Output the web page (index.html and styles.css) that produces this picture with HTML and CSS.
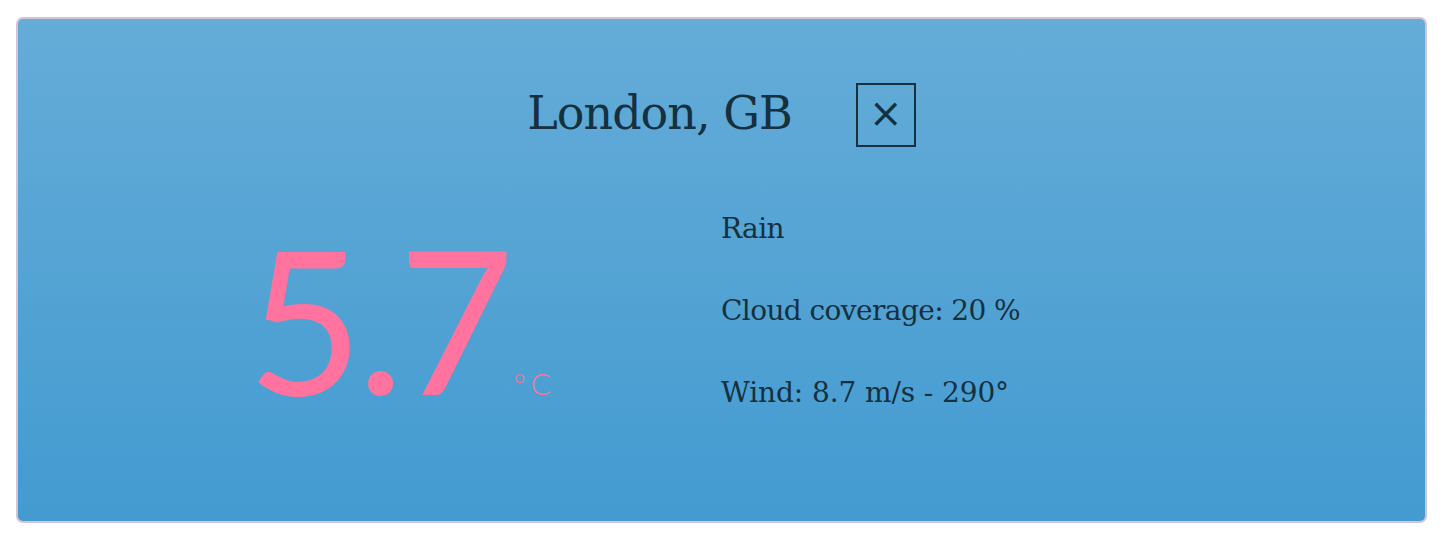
FILE: index.html
```html
<!DOCTYPE html>
<html>
<head>
<meta charset="utf-8">
<link rel="stylesheet" href="styles.css">
</head>
<body>
<div class="card">
  <div class="header">
    <h1 class="city">London, GB</h1>
    <button class="close" aria-label="close">&times;</button>
  </div>
  <div class="body">
    <div class="temp-col">
      <div class="temp"><span class="value">5.7</span><span class="unit">°C</span></div>
    </div>
    <div class="details">
      <p class="line">Rain</p>
      <p class="line">Cloud coverage: 20 %</p>
      <p class="line">Wind: 8.7 m/s - 290°</p>
    </div>
  </div>
</div>
</body>
</html>
```
FILE: styles.css
```css
html, body {
  margin: 0;
  padding: 0;
  background: #ffffff;
}
body {
  padding: 17px 15px 15px 16px;
  height: 538px;
  box-sizing: border-box;
}
.card {
  height: 506px;
  box-sizing: border-box;
  border: 2px solid #d3c5d8;
  border-radius: 7px;
  background: linear-gradient(to bottom, #65acd8 0%, #439bd0 100%);
  font-family: "DejaVu Serif", serif;
  color: #15303f;
  display: flex;
  flex-direction: column;
}
.header {
  display: flex;
  justify-content: center;
  align-items: center;
  gap: 64px;
  margin-top: 64px;
  height: 64px;
}
.city {
  margin: 0;
  font-weight: normal;
  font-size: 46px;
  letter-spacing: -1px;
  position: relative;
  top: -2px;
}
.close {
  width: 60px;
  height: 64px;
  border: 2px solid #15303f;
  background: transparent;
  color: #15303f;
  font-family: "DejaVu Sans", sans-serif;
  font-size: 40px;
  line-height: 1;
  padding: 0 0 4px 0;
  display: flex;
  align-items: center;
  justify-content: center;
}
.body {
  display: flex;
  margin-top: 50px;
}
.temp-col {
  width: 703px;
  display: flex;
  justify-content: flex-start;
  padding-left: 229px;
  padding-top: 21px;
  box-sizing: border-box;
}
.temp {
  display: flex;
  align-items: baseline;
  font-family: "Lato", sans-serif;
  font-weight: 400;
  color: #ff739e;
}
.value {
  font-size: 200px;
  line-height: 1;
  letter-spacing: -6px;
}
.unit {
  font-size: 30px;
  margin-left: 5px;
  letter-spacing: 5px;
  font-weight: 300;
}
.details {
  display: flex;
  flex-direction: column;
  gap: 46px;
  padding-top: 14px;
}
.line {
  margin: 0;
  font-size: 28px;
  line-height: 36px;
  letter-spacing: -0.6px;
}
.line:last-child {
  letter-spacing: -0.1px;
}
```
